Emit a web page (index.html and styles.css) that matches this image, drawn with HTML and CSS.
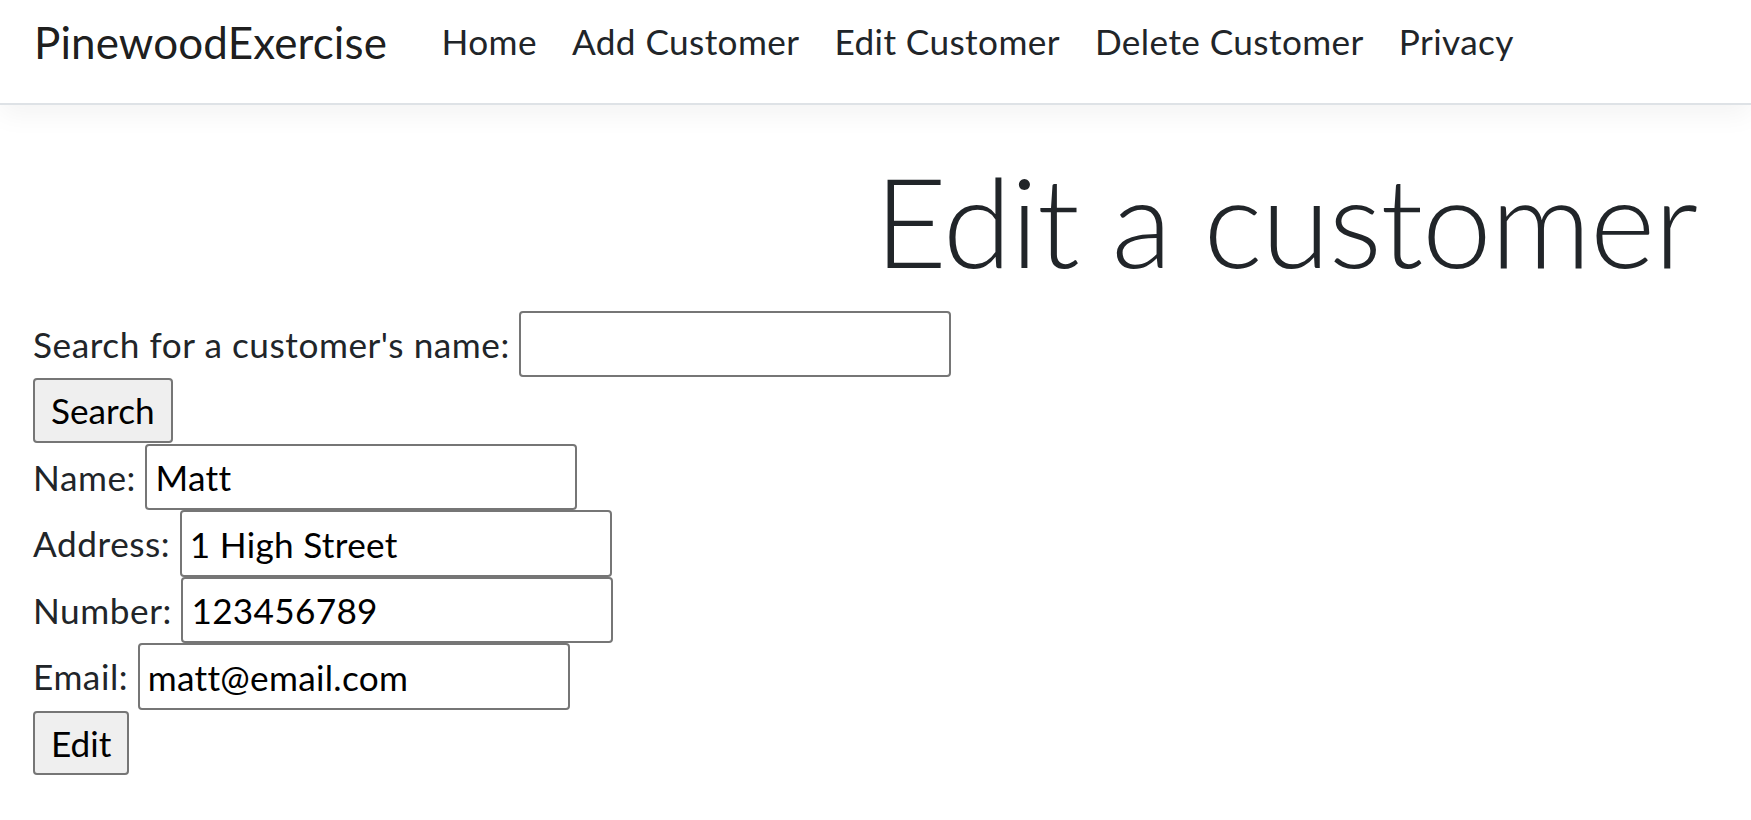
FILE: index.html
```html
<!DOCTYPE html>
<html lang="en">
<head>
<meta charset="utf-8">
<title>Edit a customer - PinewoodExercise</title>
<link rel="stylesheet" href="styles.css">
</head>
<body>
<header class="navbar">
  <a class="brand" href="#">PinewoodExercise</a>
  <nav class="nav-links">
    <a href="#">Home</a>
    <a href="#">Add Customer</a>
    <a href="#">Edit Customer</a>
    <a href="#">Delete Customer</a>
    <a href="#">Privacy</a>
  </nav>
</header>
<main class="container">
  <h1 class="title">Edit a customer</h1>
  <form class="form">
    <div class="row"><label for="search">Search for a customer's name:</label> <input id="search" type="text"></div>
    <div class="row"><button type="button">Search</button></div>
    <div class="row"><label for="name">Name:</label> <input id="name" type="text" value="Matt"></div>
    <div class="row"><label for="address">Address:</label> <input id="address" type="text" value="1 High Street"></div>
    <div class="row"><label for="number">Number:</label> <input id="number" type="text" value="123456789"></div>
    <div class="row"><label for="email">Email:</label> <input id="email" type="text" value="matt@email.com"></div>
    <div class="row"><button type="button">Edit</button></div>
  </form>
</main>
</body>
</html>
```
FILE: styles.css
```css
html, body {
  margin: 0;
  padding: 0;
  background: #fff;
}

body {
  font-family: Lato, "Liberation Sans", sans-serif;
  color: #212529;
}

.navbar {
  display: flex;
  align-items: flex-start;
  height: 103px;
  padding-left: 34px;
  border-bottom: 2px solid #dee2e6;
  box-shadow: 0 9px 26px rgba(0, 0, 0, 0.05);
}

.brand {
  font-size: 44px;
  line-height: 44px;
  margin-top: 20px;
  margin-right: 37px;
  letter-spacing: 0.1px;
  color: rgba(0, 0, 0, 0.9);
  text-decoration: none;
}

.nav-links {
  display: flex;
  margin-top: 24px;
}

.nav-links a {
  font-size: 35.2px;
  line-height: 35.2px;
  letter-spacing: 0.4px;
  padding: 0 17.5px;
  color: #212529;
  text-decoration: none;
}

.container {
  padding: 0 33px;
}

.title {
  margin: 39.6px 0 16.4px;
  padding-right: 21px;
  font-size: 125px;
  line-height: 150px;
  font-weight: 300;
  letter-spacing: -1.2px;
  text-align: right;
  color: #212529;
}

.form {
  margin: 0;
}

.row {
  height: 66.5px;
  font-size: 35.2px;
  line-height: 52.8px;
  letter-spacing: 0.55px;
  white-space: nowrap;
}

.row input {
  box-sizing: border-box;
  width: 432px;
  height: 66.5px;
  padding: 0 8px;
  border: 2px solid #767676;
  border-radius: 4px;
  font: inherit;
  line-height: 52.8px;
  letter-spacing: 0.3px;
  color: #000;
  background: #fff;
  vertical-align: baseline;
}

.row button {
  box-sizing: border-box;
  height: 64.5px;
  margin: 1px 0;
  padding: 0 16px;
  border: 2px solid #767676;
  border-radius: 4px;
  font: inherit;
  line-height: 52.8px;
  color: #000;
  background: #efefef;
  vertical-align: baseline;
}
```
